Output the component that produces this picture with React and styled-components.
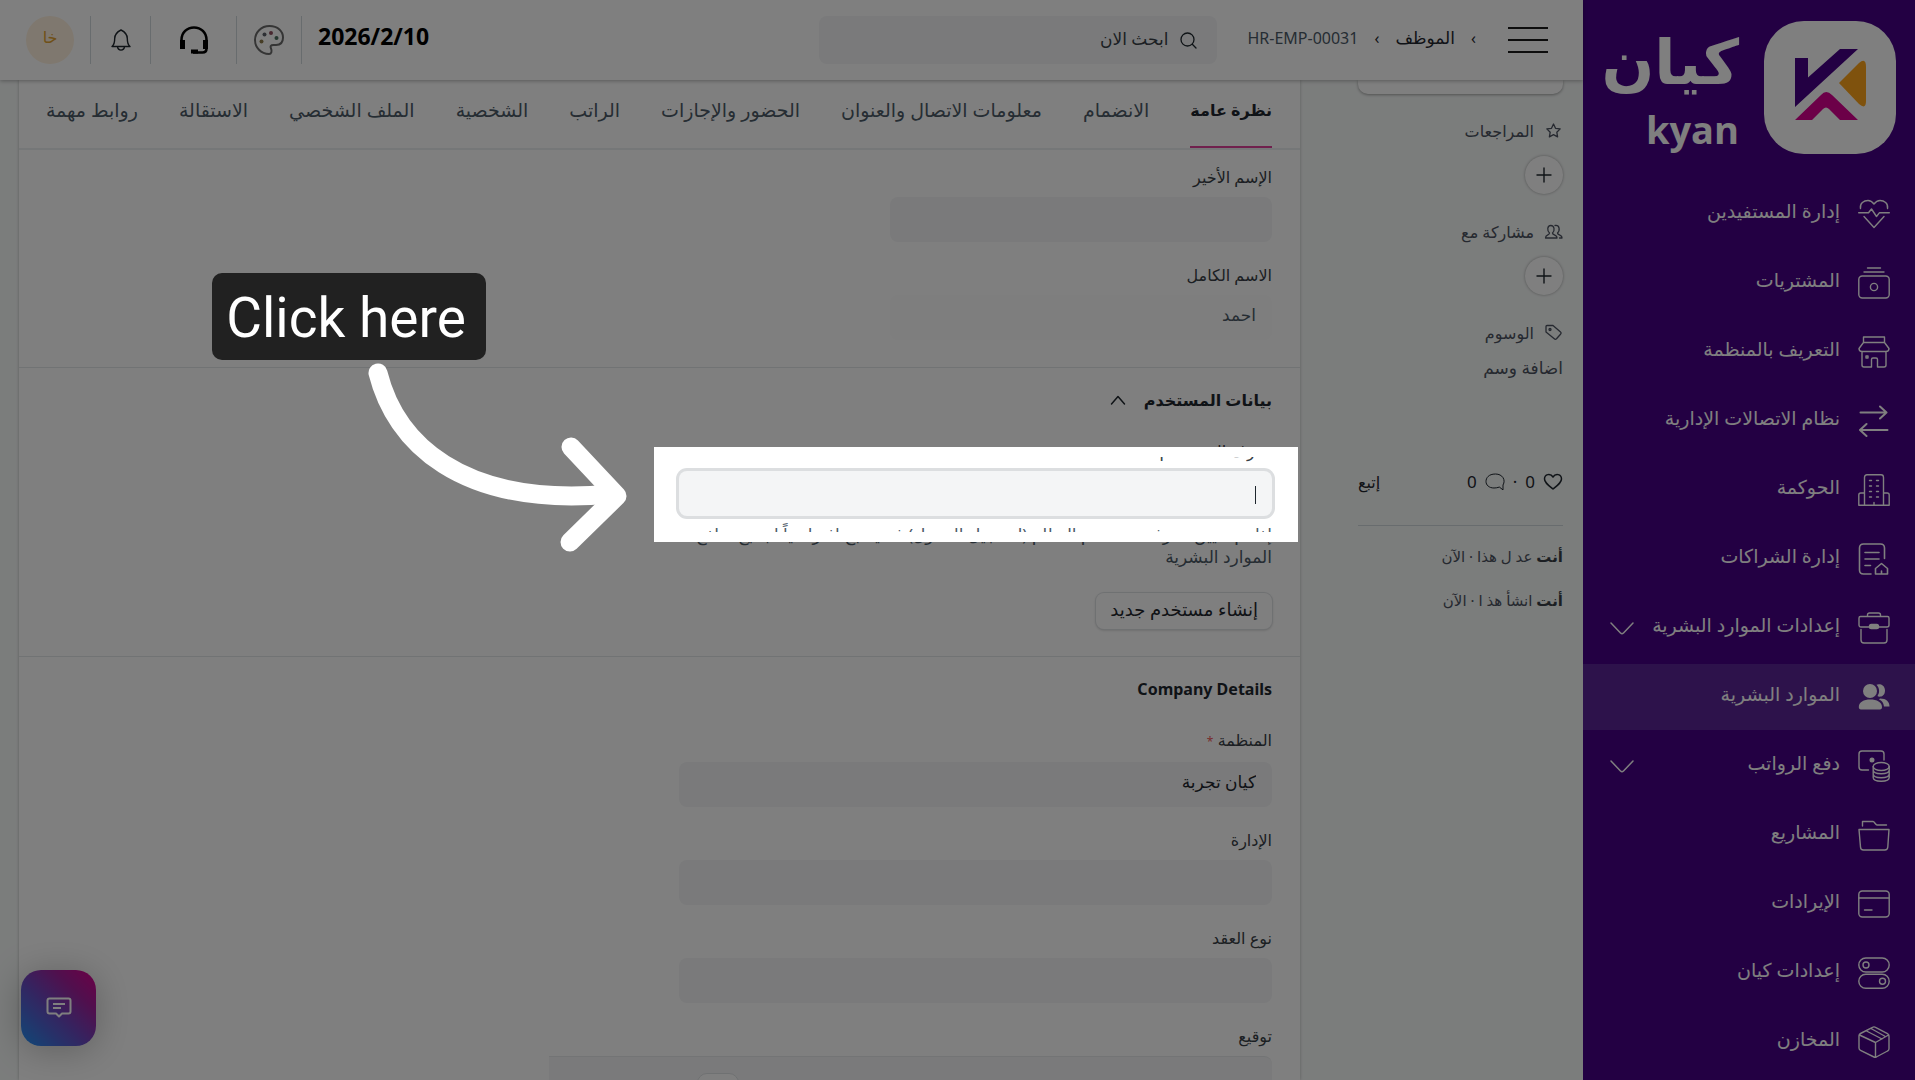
import React from "react";
import styled, { createGlobalStyle, css } from "styled-components";

const FONT = '"Noto Sans", "DejaVu Sans", sans-serif';

const GlobalStyle = createGlobalStyle`
  *, *::before, *::after { box-sizing: border-box; }
  body {
    margin: 0;
    background: #f7faf9;
    color: #1f272e;
    font-family: ${FONT};
    font-size: 16px;
    line-height: 24px;
  }
  button, input { font-family: inherit; color: inherit; }
  button { cursor: pointer; padding: 0; border: 0; background: none; }
  a { color: inherit; text-decoration: none; }
  svg { display: block; flex: none; }
`;

const Shell = styled.div`
  display: flex;
  height: 100vh;
  overflow: hidden;
`;

/* ---------- sidebar ---------- */
const Sidebar = styled.aside`
  flex: 0 0 332px;
  min-width: 0;
  background: #460086;
  color: #fff;
`;

const Brand = styled.a`
  display: flex;
  align-items: flex-start;
  gap: 25px;
  height: 181px;
  padding: 21px 19px 0;
`;

const BrandText = styled.span`
  display: flex;
  flex-direction: column;
  align-items: flex-start;
  font-weight: 700;
`;

const BrandArabic = styled.span`
  font-family: "DejaVu Sans", sans-serif;
  font-size: 62px;
  line-height: 84px;
`;

const BrandLatin = styled.span`
  font-family: "Open Sans", sans-serif;
  font-size: 38px;
  line-height: 48px;
`;

const Nav = styled.nav`
  display: flex;
  flex-direction: column;
  gap: 3px;
`;

const NavItem = styled.a`
  display: flex;
  align-items: center;
  gap: 18px;
  height: 66px;
  padding: 0 25px 0 27px;
  font-size: 19px;
  background: ${(p) => (p.$active ? "#5a2496" : "transparent")};
`;

const NavLabel = styled.span`
  flex: 1;
  padding-bottom: 6px;
  white-space: nowrap;
`;

/* ---------- header ---------- */
const Main = styled.div`
  flex: 1;
  min-width: 0;
  display: flex;
  flex-direction: column;
`;

const Header = styled.header`
  position: relative;
  z-index: 1;
  flex: none;
  display: flex;
  align-items: center;
  height: 80px;
  padding: 16px 35px 16px 26px;
  background: #fff;
  box-shadow: 0 1px 4px rgba(0, 0, 0, 0.3);
`;

const Crumbs = styled.nav`
  display: flex;
  align-items: center;
  gap: 16px;
  margin: 0 32px 0 30px;
  padding-bottom: 4px;
  white-space: nowrap;
`;

const Crumb = styled.a`
  font-size: ${(p) => (p.$current ? 16 : 17)}px;
  color: ${(p) => (p.$current ? "#4c5a67" : "#1f272e")};
`;

const Search = styled.label`
  display: flex;
  align-items: center;
  gap: 12px;
  flex: 0 1 398px;
  height: 48px;
  padding: 0 20px;
  border-radius: 8px;
  background: #f4f5f6;
`;

const SearchInput = styled.input`
  flex: 1;
  min-width: 0;
  height: 48px;
  padding: 0 0 4px;
  border: 0;
  outline: 0;
  background: none;
  font-size: 17px;
  &::placeholder { color: #383f46; opacity: 1; }
`;

const Tools = styled.div`
  display: flex;
  align-items: center;
  margin-right: auto;
`;

const DateText = styled.time`
  padding: 0 0 8px 16px;
  font-size: 23px;
  line-height: 40px;
  font-weight: 700;
  color: #000;
  direction: ltr;
`;

const Tool = styled.button`
  display: flex;
  align-items: center;
  justify-content: center;
  width: ${(p) => p.$width}px;
  height: 48px;
  border-right: 1px solid #d1d8dd;
`;

const Avatar = styled.span`
  display: flex;
  align-items: center;
  justify-content: center;
  width: 48px;
  height: 48px;
  padding-bottom: 6px;
  margin-right: 16px;
  border-radius: 50%;
  background: #fff1de;
  color: #e0a030;
`;

/* ---------- body ---------- */
const Body = styled.div`
  flex: 1;
  min-height: 0;
  display: flex;
  padding-left: 19px;
`;

const Details = styled.aside`
  flex: 0 0 283px;
  padding: 0 20px 0 58px;
  color: #4c5360;
`;

const DetailsCard = styled.div`
  height: 14px;
  margin-bottom: 24px;
  border-radius: 0 0 10px 10px;
  background: #fff;
  box-shadow: 0 1px 3px rgba(0, 0, 0, 0.35);
`;

const Group = styled.section`
  display: flex;
  flex-direction: column;
  align-items: flex-start;
  gap: 13px;
  margin-bottom: 25px;
`;

const GroupTitle = styled.div`
  display: flex;
  align-items: center;
  gap: 10px;
  height: 25px;
`;

const AddTag = styled.button`
  margin-top: -2px;
  font-size: 17px;
  line-height: 24px;
`;

const AddButton = styled.button`
  display: flex;
  align-items: center;
  justify-content: center;
  width: 38px;
  height: 38px;
  border-radius: 50%;
  background: #fff;
  color: #1f272e;
  box-shadow: 0 0 3px rgba(0, 0, 0, 0.35);
`;

const Social = styled.div`
  display: flex;
  align-items: center;
  gap: 8px;
  margin-top: 90px;
  padding-bottom: 31px;
  border-bottom: 1px solid #d1d8dd;
  font-size: 17px;
  color: #1f272e;
`;

const Follow = styled.button`
  margin-right: auto;
  font-size: 16px;
`;

const Log = styled.p`
  margin: 18px 0 20px;
  font-size: 15px;
  b { color: #383f46; }
`;

const Form = styled.main`
  flex: 1;
  min-width: 0;
  background: #fff;
  box-shadow: 0 0 3px rgba(0, 0, 0, 0.25);
`;

const Tabs = styled.div`
  display: flex;
  gap: 41px;
  height: 70px;
  padding: 0 28px;
  border-bottom: 2px solid #ebeef0;
`;

const Tab = styled.button`
  height: 68px;
  padding-bottom: 8px;
  font-size: 19px;
  white-space: nowrap;
  color: #4c5a67;
  ${(p) =>
    p.$active &&
    css`
      padding-bottom: 6px;
      border-bottom: 2px solid #e0409a;
      font-size: 16px;
      font-weight: 700;
      color: #1f272e;
    `}
`;

const Section = styled.section`
  padding: ${(p) => (p.$plain ? 15 : 20)}px 28px 27px;
  border-bottom: 1px solid #e2e6e9;
`;

const Heading = styled.h2`
  display: flex;
  align-items: center;
  gap: 18px;
  margin: 0 0 27px;
  font-size: 16px;
  line-height: 24px;
  font-weight: 700;
`;

const Field = styled.div`
  position: relative;
  width: ${(p) => (p.$narrow ? 382 : 593)}px;
  max-width: 100%;
  & + & { margin-top: 21px; }
`;

const Label = styled.label`
  display: block;
  margin-bottom: 8px;
  color: #383f46;
`;

const Star = styled.span`
  color: #f05a5a;
  font-size: 12px;
`;

const Control = styled.div`
  position: relative;
`;

const Input = styled.input`
  display: block;
  width: 100%;
  height: 45px;
  padding: 0 16px 6px;
  border: 0;
  outline: 0;
  border-radius: 8px;
  background: ${(p) => (p.readOnly ? "#fcfcfc" : "#f4f5f6")};
  color: ${(p) => (p.readOnly ? "#4c5a67" : "#1f272e")};
  font-size: 17px;
  caret-color: transparent;
  box-shadow: ${(p) => (p.$focus ? "0 0 0 3px #dcdee0" : "none")};
`;

const Caret = styled.span`
  position: absolute;
  top: 15px;
  right: 16px;
  width: 1px;
  height: 18px;
  background: #1f272e;
`;

const Help = styled.p`
  margin: 8px 0 25px;
  font-size: 17px;
  line-height: 22px;
  color: #4c5a67;
`;

const Secondary = styled.button`
  display: block;
  height: 36px;
  padding: 0 14px 4px;
  border-radius: 8px;
  background: #fff;
  box-shadow: 0 0 0 1px #dfe2e5, 0 1px 3px rgba(0, 0, 0, 0.25);
  font-size: 18px;
`;

const SignaturePad = styled.div`
  display: flex;
  justify-content: flex-end;
  width: 723px;
  height: 150px;
  padding: 16px 0 0 148px;
  border-top: 1px solid #e6e9eb;
  border-radius: 0 8px 0 0;
  background: #f4f5f6;
`;

const PadButton = styled.button`
  width: 42px;
  height: 36px;
  border: 1px solid #dfe2e5;
  border-radius: 10px;
  background: #fff;
`;

/* ---------- floating parts ---------- */
const Chat = styled.button`
  position: fixed;
  left: 21px;
  bottom: 34px;
  z-index: 2;
  display: flex;
  align-items: center;
  justify-content: center;
  width: 75px;
  height: 76px;
  border-radius: 20px;
  background: linear-gradient(45deg, #2090f0, #6a48c0 45%, #a0209c 72%, #d8008c);
  box-shadow: 0 4px 36px rgba(0, 0, 0, 0.25);
`;

const Spotlight = styled.div`
  position: absolute;
  top: -24px;
  bottom: -26px;
  left: -25px;
  right: -26px;
  z-index: 5;
  border: 10px solid #fff;
  box-shadow: 0 0 0 9999px rgba(0, 0, 0, 0.5);
  pointer-events: none;
`;

const Bubble = styled.div`
  position: absolute;
  right: 802px;
  top: -184px;
  width: 274px;
  padding: 4px 20px 0 14px;
  border-radius: 10px;
  background: #212121;
  color: #fff;
  font-family: Roboto, sans-serif;
  font-size: 55px;
  line-height: 83px;
  white-space: nowrap;
  text-align: center;
  direction: ltr;
`;

const Arrow = styled.svg`
  position: absolute;
  right: 661px;
  top: -100px;
  width: 262px;
  height: 196px;
`;

/* ---------- icons ---------- */
const Line = ({ size = 32, box = 32, width = 1.4, children }) => (
  <svg
    width={size}
    height={size}
    viewBox={`0 0 ${box} ${box}`}
    fill="none"
    stroke="currentColor"
    strokeWidth={width}
    strokeLinecap="round"
    strokeLinejoin="round"
    aria-hidden="true"
  >
    {children}
  </svg>
);

const icons = {
  heart: (
    <>
      <path d="M2.500 10.500C1.500 5 6 2.500 10 2.500c3 0 4.500 1.500 6 3.500 1.500-2 3-3.500 6-3.500 4 0 8.500 2.500 7.500 8M6 18.500 16 29.500 26 18.500" />
      <path d="M.7 14.800h9.800L13.500 11l5 7.500 2.800-3.700h10" />
    </>
  ),
  wallet: (
    <>
      <rect x=".8" y="9" width="30.400" height="22" rx="3.500" />
      <circle cx="16" cy="20" r="3.600" />
      <path d="M6 5h20M9.500 1h13" />
    </>
  ),
  store: (
    <>
      <path d="M5.500 1h21v5.500l4.500 6c0 2-1.500 3-3 3H4c-1.500 0-3-1-3-3l4.500-6zM5.500 6.500h21M4 15.500V29c0 1.300.7 2 2 2h7.500v-7.500c0-1 .7-1.500 1.500-1.500h3c1 0 1.500.5 1.500 1.500V31H26c1.300 0 2-.7 2-2V15.500" />
      <path d="M8 20h2v2H8z" />
    </>
  ),
  arrows: (
    <g strokeWidth="2">
      <path d="M2.500 7.500h26M22 1.500l6.500 6-6.500 6M29.500 25h-27M8.500 19l-6.500 6 6.500 6" />
    </g>
  ),
  building: (
    <>
      <path d="M6.500 31V3.500C6.500 2 7.500.8 9 .8h14c1.500 0 2.500 1.200 2.500 2.700V31M.8 31.200h30.400V21c0-1.200-.8-2-2-2h-3.500M.8 31V21c0-1.200.8-2 2-2h3.500M16 31v-2.500" />
      <path d="M11.500 6.500h2m5 0h2m-9 5.500h2m5 0h2m-9 5.500h2m5 0h2m-9 5.500h2m5 0h2" />
    </>
  ),
  contract: (
    <g strokeWidth="1.600">
      <path d="M26.500 15.500V5c0-2.500-1.500-4-4-4h-17c-2.500 0-4 1.500-4 4v22c0 2.500 1.500 4 4 4H13M7 9.500h14M7 16h14M7 22.500h5.500" />
      <path d="M17.500 25.500 23.500 20.500l6 5V31h-12zM23.500 28v3" />
    </g>
  ),
  briefcase: (
    <>
      <path d="M9.500 4.500V3c0-1.200.8-2 2-2h9c1.200 0 2 .8 2 2v1.500M2.500 4.500h27c1 0 1.500.5 1.500 1.500v7c0 1.200-.8 2-2 2h-8M11 15H3c-1.200 0-2-.8-2-2V6c0-1 .5-1.500 1.500-1.500M3 17.500V28c0 2 1 3 3 3h20c2 0 3-1 3-3V17.500" />
      <rect x="11.500" y="12.500" width="9" height="4" rx="1.800" fill="currentColor" />
    </>
  ),
  people: (
    <g fill="currentColor" stroke="none">
      <circle cx="12" cy="10" r="7" />
      <path d="M.8 26c0-5 5-7.500 11.500-7.500S24 21 24 26c0 1.500-.5 2.500-2 2.500H3C1.500 28.500.8 27.500.8 26zM18.500 3.800c2-1.500 8.500-.8 8.500 5.700s-6 7-7.500 5.500c2.500-3.500 2-8-1-11.200zM22 17.500c6.500 0 9.500 3.500 9.500 8h-5.500c-.5-3.500-2-6-5-7z" />
    </g>
  ),
  payroll: (
    <>
      <path d="M10.500 20H4c-2 0-3-1-3-3V4c0-2 1-3 3-3h19c2 0 3 1 3 3v6" />
      <circle cx="14" cy="10" r="1.800" fill="currentColor" />
      <ellipse cx="23.200" cy="16.500" rx="8" ry="4" />
      <path d="M15.200 16.500v11c0 5 16 5 16 0v-11M15.200 20c0 5 16 5 16 0M15.200 24c0 5 16 5 16 0" />
    </>
  ),
  folder: (
    <path d="M1 10.500h30L29.800 28c-.1 1.700-1.300 3-3 3H5.500c-1.700 0-3-1.300-3-3zM4.500 7V2.500H15c1.500 0 2.500 3.500 4 3.500h9.500" />
  ),
  card: (
    <>
      <rect x=".8" y="3" width="30.400" height="26" rx="3.500" />
      <path d="M1 10h30M6.500 22H14" />
    </>
  ),
  toggles: (
    <>
      <rect x=".8" y="1" width="30.400" height="14" rx="7" />
      <rect x=".8" y="17.300" width="30.400" height="14" rx="7" />
      <circle cx="8" cy="8" r="3" />
      <circle cx="24.500" cy="24.300" r="3" />
    </>
  ),
  box: (
    <path d="M15 1.200 2.500 7.500C1.500 8 1 8.700 1 9.800V22c0 1 .5 1.800 1.500 2.300L16 31c.8.400 1.500.4 2.300 0L29.500 25c1-.5 1.500-1.300 1.500-2.300V10c0-1-.5-1.800-1.500-2.300L17 1.200c-.7-.4-1.300-.4-2 0zM1.500 9 17.500 16.500 30.500 9M17.500 16.500V31M8.500 5l15.500 8M13 2.500 26.500 10" />
  ),
};

const navItems = [
  ["heart", "إدارة المستفيدين"],
  ["wallet", "المشتريات"],
  ["store", "التعريف بالمنظمة"],
  ["arrows", "نظام الاتصالات الإدارية"],
  ["building", "الحوكمة"],
  ["contract", "إدارة الشراكات"],
  ["briefcase", "إعدادات الموارد البشرية", true],
  ["people", "الموارد البشرية"],
  ["payroll", "دفع الرواتب", true],
  ["folder", "المشاريع"],
  ["card", "الإيرادات"],
  ["toggles", "إعدادات كيان"],
  ["box", "المخازن"],
];

const tabs = [
  "نظرة عامة",
  "الانضمام",
  "معلومات الاتصال والعنوان",
  "الحضور والإجازات",
  "الراتب",
  "الشخصية",
  "الملف الشخصي",
  "الاستقالة",
  "روابط مهمة",
];

const Plus = () => (
  <Line size={16} box={16} width={1.4}>
    <path d="M8 1v14M1 8h14" />
  </Line>
);

const LogoMark = () => (
  <svg width="132" height="133" viewBox="0 0 132 133" aria-hidden="true">
    <rect width="132" height="133" rx="40" fill="#fff" />
    <path d="M31 37h13v19.500L76 28h18L31 86z" fill="#460086" />
    <path d="M31 99 57 74q5-6 11 0l26 25H76L65 88q-3-3-6 0L48 99z" fill="#d80090" />
    <path d="M75 62 95 42q7-6 7 4v34q0 9-7 3z" fill="#ffa41a" />
  </svg>
);

export default function App() {
  return (
    <Shell dir="rtl" lang="ar">
      <GlobalStyle />
      <Sidebar>
        <Brand href="#home">
          <LogoMark />
          <BrandText>
            <BrandArabic>كيان</BrandArabic>
            <BrandLatin>kyan</BrandLatin>
          </BrandText>
        </Brand>
        <Nav>
          {navItems.map(([icon, text, expandable]) => (
            <NavItem key={text} href={`#${icon}`} $active={icon === "people"}>
              <Line>{icons[icon]}</Line>
              <NavLabel>{text}</NavLabel>
              {expandable && (
                <Line size={24} box={24} width={1.5}>
                  <path d="M1 7l9.500 10q1.500 1.300 3 0L23 7" />
                </Line>
              )}
            </NavItem>
          ))}
        </Nav>
      </Sidebar>

      <Main>
        <Header>
          <button type="button" aria-label="القائمة">
            <svg width="40" height="26" viewBox="0 0 40 26" stroke="#1a1a1a" strokeWidth="2">
              <path d="M0 1h40M0 13h40M0 25h40" />
            </svg>
          </button>
          <Crumbs>
            <span>›</span>
            <Crumb href="#employee">الموظف</Crumb>
            <span>›</span>
            <Crumb href="#record" $current>
              HR-EMP-00031
            </Crumb>
          </Crumbs>
          <Search>
            <Line size={17} box={17} width={1.3}>
              <circle cx="7.500" cy="7.500" r="6.500" />
              <path d="M12.300 12.300 16 16" />
            </Line>
            <SearchInput type="search" placeholder="ابحث الان" aria-label="بحث" />
          </Search>
          <Tools>
            <DateText>2026/2/10</DateText>
            <Tool type="button" $width={65} aria-label="السمة">
              <svg width="30" height="30" viewBox="0 0 30 30" fill="none" stroke="#6a6a6a" strokeWidth="2" aria-hidden="true">
                <path d="M15 29C7 29 1 22.500 1 15S7 1 15.500 1 29 6.500 29 12.500c0 5-3 7.500-7 7.500h-2.500c-3 0-3.500 1.500-2.500 3.500 1.200 2.500.5 5.500-2 5.500z" />
                <g stroke="none">
                  <circle cx="7.500" cy="16.500" r="2" fill="#8c7a4c" />
                  <circle cx="10.500" cy="9.500" r="2" fill="#5c6068" />
                  <circle cx="17" cy="8" r="2" fill="#905060" />
                  <circle cx="22.500" cy="13" r="2" fill="#4c7060" />
                </g>
              </svg>
            </Tool>
            <Tool type="button" $width={86} aria-label="الدعم">
              <svg width="30" height="28" viewBox="0 0 30 28" fill="none" stroke="#000" strokeWidth="2.600" aria-hidden="true">
                <path d="M2.500 18v-4C2.500 6.500 8 1.500 15 1.500S27.500 6.500 27.500 14v8.500c0 2.500-1.500 4-4 4H14" />
                <path d="M3.500 14v9M26.500 14v9" strokeWidth="5" />
                <path d="M12 25.500h7" strokeWidth="4" />
              </svg>
            </Tool>
            <Tool type="button" $width={60} aria-label="الإشعارات">
              <Line size={24} box={24} width={1.4}>
                <path d="M3 18.500c2.500-2 2.700-4 2.700-8 0-4 2.300-6.500 6.300-8.500 4 2 6.300 4.500 6.300 8.500 0 4 .2 6 2.700 8zM8.500 18.700c.5 4.500 6.500 4.500 7 0" />
              </Line>
            </Tool>
            <Tool as="div" $width={65}>
              <Avatar>خا</Avatar>
            </Tool>
          </Tools>
        </Header>

        <Body>
          <Details>
            <DetailsCard />
            <Group>
              <GroupTitle>
                <Line size={19} box={19} width={1.3}>
                  <path d="m9.500 3 2 4.300 4.700.6-3.400 3.300.8 4.700-4.100-2.300-4.100 2.300.8-4.700L2.800 7.900l4.700-.6z" />
                </Line>
                المراجعات
              </GroupTitle>
              <AddButton type="button" aria-label="إضافة مراجعة">
                <Plus />
              </AddButton>
            </Group>
            <Group>
              <GroupTitle>
                <Line size={19} box={19} width={1.3}>
                  <path d="M1.500 16c0-4 4-2.500 4-5C3 9 3 3.500 6.800 3.500S11 9 8.500 11c0 2.500 4.500 1 4.500 5zM11 3.500c5-.8 5 5.500 2.500 7.500 0 2.500 4.500 1 4.500 5h-2.500" />
                </Line>
                مشاركة مع
              </GroupTitle>
              <AddButton type="button" aria-label="إضافة مشاركة">
                <Plus />
              </AddButton>
            </Group>
            <Group>
              <GroupTitle>
                <Line size={19} box={19} width={1.3}>
                  <path d="M2 3.500c0-.6.4-1 1-1h6L16.500 9c.8.700.8 1.500 0 2.300l-4 4.500c-.7.700-1.500.7-2.200 0L2 9z" />
                  <circle cx="6" cy="6.500" r="1" />
                </Line>
                الوسوم
              </GroupTitle>
              <AddTag type="button">اضافة وسم</AddTag>
            </Group>
            <Social>
              <Line size={20} box={20} width={1.5}>
                <path d="M10 17C5 13 1.500 10.500 1.500 7c0-5 6-6 8.500-2 2.500-4 8.500-3 8.500 2 0 3.500-3.500 6-8.500 10z" />
              </Line>
              <span>0</span>
              <span>·</span>
              <Line size={20} box={20} width={1}>
                <path d="M18 17.500v-4.500C21 8 17.500 2 10.500 2S1 6 1 9.500 4 16 9 16c2 0 3.500-.3 5-.8z" />
              </Line>
              <span>0</span>
              <Follow type="button">إتبع</Follow>
            </Social>
            <Log>
              <b>أنت</b> عد ل هذا · الآن
            </Log>
            <Log>
              <b>أنت</b> انشأ هذ ا · الآن
            </Log>
          </Details>

          <Form>
            <Tabs role="tablist">
              {tabs.map((t, i) => (
                <Tab key={t} type="button" role="tab" aria-selected={i === 0} $active={i === 0}>
                  {t}
                </Tab>
              ))}
            </Tabs>

            <Section $plain>
              <Field $narrow>
                <Label htmlFor="last">الإسم الأخير</Label>
                <Input id="last" />
              </Field>
              <Field $narrow>
                <Label htmlFor="full">الاسم الكامل</Label>
                <Input id="full" readOnly value="احمد" />
              </Field>
            </Section>

            <Section>
              <Heading>
                بيانات المستخدم
                <Line size={16} box={16} width={1.5}>
                  <path d="M1.500 12 8 4.500l6.500 7.500" />
                </Line>
              </Heading>
              <Field>
                <Label htmlFor="user">معرف المستخدم</Label>
                <Control>
                  <Input id="user" $focus />
                  <Caret />
                  <Spotlight>
                    <Bubble>Click here</Bubble>
                    <Arrow viewBox="0 0 262 196" fill="none" stroke="#fff" strokeWidth="19" strokeLinecap="round" strokeLinejoin="round">
                      <path d="M13 16c17 68 81 135 233 121" />
                      <path d="M206 90l46 49-47 46" />
                    </Arrow>
                  </Spotlight>
                </Control>
              </Field>
              <Help>
                إذا تم تعيين معرف مستخدم النظام (لتسجيل الدخول) فسيصبح افتراضياً لجميع نماذج
                <br />
                الموارد البشرية
              </Help>
              <Secondary type="button">إنشاء مستخدم جديد</Secondary>
            </Section>

            <Section>
              <Heading>Company Details</Heading>
              <Field>
                <Label htmlFor="org">
                  المنظمة <Star>*</Star>
                </Label>
                <Input id="org" defaultValue="كيان تجربة" />
              </Field>
              <Field>
                <Label htmlFor="dept">الإدارة</Label>
                <Input id="dept" />
              </Field>
              <Field>
                <Label htmlFor="contract">نوع العقد</Label>
                <Input id="contract" />
              </Field>
              <Field>
                <Label as="div">توقيع</Label>
                <SignaturePad>
                  <PadButton type="button" aria-label="مسح التوقيع" />
                </SignaturePad>
              </Field>
            </Section>
          </Form>
        </Body>
      </Main>

      <Chat type="button" aria-label="المحادثة">
        <svg width="26" height="22" viewBox="0 0 26 22" fill="none" stroke="#fff" strokeWidth="2" strokeLinejoin="round" aria-hidden="true">
          <path d="M3.500 1.500h19q2 0 2 2v11q0 2-2 2H16l-3 3-3-3H3.500q-2 0-2-2v-11q0-2 2-2z" />
          <path d="M7 7h12M7 11h8" />
        </svg>
      </Chat>
    </Shell>
  );
}
